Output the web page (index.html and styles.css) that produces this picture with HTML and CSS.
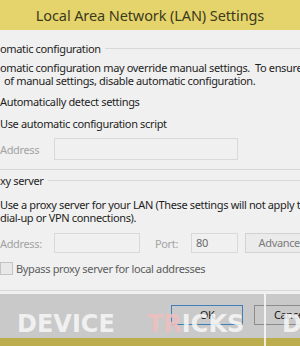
FILE: index.html
```html
<!DOCTYPE html>
<html lang="en">
<head>
    <meta charset="UTF-8">
    <title>Local Area Network (LAN) Settings</title>
    <link rel="stylesheet" href="styles.css">
</head>
<body>
    <div class="titlebar">Local Area Network (LAN) Settings</div>

    <div class="dialog">
        <section class="group group-auto">
            <div class="legend"><span>omatic configuration</span><i></i></div>
            <p class="note">omatic configuration may override manual settings.&nbsp; To ensure<br><span class="indent">of manual settings, disable automatic configuration.</span></p>
            <div class="check-row">Automatically detect settings</div>
            <div class="check-row">Use automatic configuration script</div>
            <div class="field-row first">
                <span class="label muted addr">Address</span>
                <span class="box box-script"></span>
            </div>
        </section>

        <section class="group group-proxy">
            <div class="legend"><span>xy server</span><i></i></div>
            <p class="note">Use a proxy server for your LAN (These settings will not apply t<br>dial-up or VPN connections).</p>
            <div class="field-row second">
                <span class="label muted addr">Address:</span>
                <span class="box box-addr"></span>
                <span class="label muted port">Port:</span>
                <span class="box box-port">80</span>
                <span class="btn btn-adv">Advanced</span>
            </div>
            <div class="bypass-row">
                <span class="checkbox"></span>
                <span>Bypass proxy server for local addresses</span>
            </div>
        </section>

        <div class="footer">
            <span class="btn btn-ok">OK</span>
            <span class="btn btn-cancel">Cancel</span>
            <div class="watermark">
                <span class="wm-word wm-device">DEVICE</span>
                <span class="wm-word wm-tricks"><em>TR</em>ICKS</span>
                <span class="wm-bar"></span>
                <span class="wm-word">D</span>
            </div>
        </div>
    </div>

    <div class="bottombar"></div>
</body>
</html>
```

FILE: styles.css
```css
body {
    margin: 0;
    width: 300px;
    height: 346px;
    overflow: hidden;
    background: #f0f0f0;
    font-family: 'Noto Sans', 'Open Sans', sans-serif;
    font-size: 11px;
    letter-spacing: -0.35px;
    color: #1e1e1e;
}

.titlebar {
    height: 30px;
    line-height: 31px;
    background: #e5d46c;
    color: #3c3a1c;
    text-align: center;
    font-size: 14.5px;
    letter-spacing: -0.1px;
    white-space: nowrap;
}

.dialog {
    position: relative;
    height: 308px;
    white-space: nowrap;
}

.group-auto {
    padding-top: 12px;
    padding-bottom: 9px;
    border-bottom: 1px solid #d8d8d8;
}

.group-proxy {
    padding-top: 4px;
    padding-bottom: 15px;
    border-bottom: 1px solid #d8d8d8;
}

.legend {
    display: flex;
    align-items: center;
    height: 14px;
    line-height: 14px;
}

.legend i {
    flex: 1;
    margin-left: 4px;
    margin-top: -1px;
    border-top: 1px solid #d8d8d8;
}

.note {
    margin: 5px 0 0;
    line-height: 13px;
}

.group-proxy .note {
    margin-top: 10px;
}

.indent {
    padding-left: 4px;
}

.check-row {
    height: 14px;
    line-height: 14px;
    margin-top: 8px;
}

.field-row {
    display: flex;
    align-items: center;
}

.field-row.first {
    margin-top: 7px;
    height: 22px;
}

.field-row.second {
    margin-top: 9px;
    height: 20px;
}

.label {
    flex: none;
}

.muted {
    color: #a3a3a3;
}

.addr {
    width: 54px;
}

.port {
    width: 36px;
    margin-left: 15px;
}

.box {
    box-sizing: border-box;
    height: 100%;
    border: 1px solid #d9d9d9;
    background: #f0f0f0;
    flex: none;
}

.box-script { width: 184px; }
.box-addr { width: 86px; }

.box-port {
    width: 47px;
    padding-left: 4px;
    line-height: 18px;
    color: #6a6a6a;
}

.btn {
    box-sizing: border-box;
    display: inline-block;
    flex: none;
    text-align: center;
}

.btn-adv {
    width: 75px;
    height: 100%;
    margin-left: 7px;
    line-height: 18px;
    border: 1px solid #d2d2d2;
    background: #ebebeb;
    color: #7a7a7a;
}

.bypass-row {
    display: flex;
    align-items: center;
    margin-top: 9px;
    height: 13px;
    color: #5c5c5c;
}

.checkbox {
    box-sizing: border-box;
    width: 13px;
    height: 13px;
    margin-right: 3px;
    border: 1px solid #c4c4c4;
    background: #e8e8e8;
}

.footer {
    position: relative;
    margin-top: 3px;
    height: 44px;
    background: #c9c9c9;
    padding-top: 11px;
    box-sizing: border-box;
}

.btn-ok {
    width: 72px;
    height: 20px;
    margin-left: 171px;
    line-height: 18px;
    border: 1px solid #3f80b8;
    color: #1a1a1a;
}

.btn-cancel {
    width: 73px;
    height: 20px;
    margin-left: 8px;
    line-height: 18px;
    border: 1px solid #8c8c8c;
    color: #1a1a1a;
}

/* watermark sits over the buttons */
.watermark {
    position: absolute;
    left: 17px;
    top: 0;
    height: 52px;
    display: flex;
    align-items: flex-start;
    color: rgba(248, 248, 248, 0.85);
    font-family: 'DejaVu Sans', sans-serif;
    font-weight: bold;
    font-size: 24px;
    letter-spacing: 0;
    line-height: 1;
    pointer-events: none;
}

.wm-word {
    flex: none;
    margin-top: 18px;
}

.wm-device {
    width: 106px;
    margin-right: 24px;
}

.wm-tricks {
    width: 100px;
    margin-right: 17px;
}

.wm-word em {
    font-style: normal;
    color: rgba(240, 190, 190, 0.85);
}

.wm-bar {
    flex: none;
    width: 2px;
    height: 52px;
    margin-right: 16px;
    background: rgba(248, 248, 248, 0.85);
}

.bottombar {
    height: 8px;
    background: #bcad4f;
}
```
